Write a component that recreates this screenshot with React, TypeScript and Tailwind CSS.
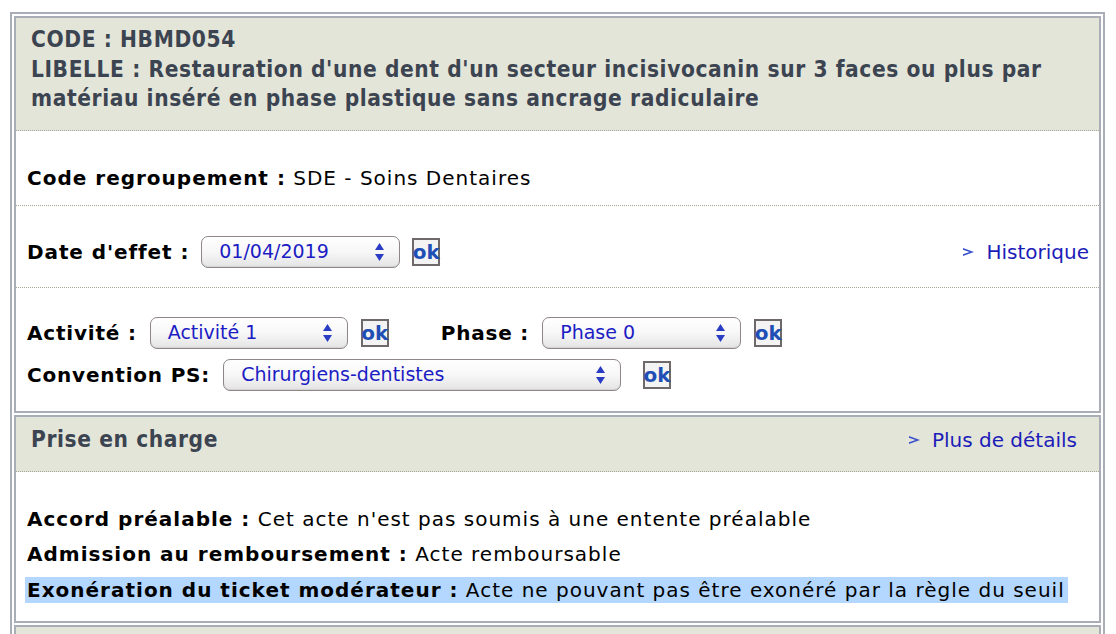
import React from 'react';

const body = { fontFamily: '"DejaVu Sans", Verdana, sans-serif' };
const head = { fontFamily: '"DejaVu Sans Condensed", "DejaVu Sans", Tahoma, sans-serif' };

function Arrows() {
  return (
    <svg width="9" height="18" viewBox="0 0 9 18" className="shrink-0">
      <polygon points="0,7 4.5,0 9,7" fill="#2a3cc4" />
      <polygon points="0,11 9,11 4.5,18" fill="#2a3cc4" />
    </svg>
  );
}

function Select({ value, width }: { value: string; width: string }) {
  return (
    <div
      className={`${width} h-[32px] shrink-0 rounded-[7px] border-[1.5px] border-[#8e8688] bg-gradient-to-b from-white via-[#f7f7f7] to-[#e4e4e4] flex items-center pl-[17px] pr-[15px] text-[19px] tracking-normal text-[#1c1cc4] shadow-[inset_0_-1px_1px_rgba(0,0,0,0.08)]`}
    >
      <span className="flex-1 whitespace-nowrap">{value}</span>
      <Arrows />
    </div>
  );
}

function Ok() {
  return (
    <div className="w-[28px] h-[28px] shrink-0 border-2 border-[#6e6869] bg-[#f3f3f3] flex items-center justify-center text-[20px] font-bold tracking-normal text-[#1f4fb5] leading-none">
      ok
    </div>
  );
}

function Chevron() {
  return (
    <svg width="11" height="8" viewBox="0 0 11 8" className="shrink-0">
      <path d="M0 0 L11 4 L0 8 L0 6.2 L6.5 4 L0 1.8 Z" fill="#3a52cc" />
    </svg>
  );
}

function LinkMore({ label }: { label: string }) {
  return (
    <a className="flex items-center gap-[12px] text-[20px] tracking-normal font-normal text-[#1c1cb8]" style={body}>
      <Chevron />
      <span>{label}</span>
    </a>
  );
}

export default function App() {
  return (
    <div className="min-h-screen bg-white pl-[10px] pt-[12px] overflow-hidden" style={body}>
      <div className="w-[1095px] border-2 border-[#a9adb5] p-[2px] flex flex-col gap-[2px]">
        {/* Fiche acte */}
        <div className="border-2 border-[#a9adb5]">
          <div
            className="bg-[#e4e5d9] px-[15px] pt-[7px] pb-[16px] text-[22.5px] leading-[29.5px] tracking-[0.6px] font-bold text-[#3b4450] border-b border-dotted border-[#a9a597] whitespace-nowrap"
            style={head}
          >
            <div>CODE : HBMD054</div>
            <div>
              LIBELLE : Restauration d'une dent d'un secteur incisivocanin sur 3 faces ou plus par
              <br />
              matériau inséré en phase plastique sans ancrage radiculaire
            </div>
          </div>

          <div className="px-[11px] pt-[35px] pb-[15px] text-[20px] leading-[24px] tracking-[1px] text-black border-b border-dotted border-[#a9a597]">
            <span className="font-bold">Code regroupement :</span> SDE - Soins Dentaires
          </div>

          <div className="pl-[11px] pr-[10px] pt-[30px] pb-[19px] flex items-center border-b border-dotted border-[#a9a597]">
            <div className="flex items-center h-[32px] text-[20px] tracking-[0.9px] text-black">
              <span className="font-bold mr-[12px]">Date d'effet :</span>
              <Select value="01/04/2019" width="w-[199px]" />
              <div className="ml-[12px]">
                <Ok />
              </div>
            </div>
            <div className="ml-auto">
              <LinkMore label="Historique" />
            </div>
          </div>

          <div className="px-[11px] pt-[29px] pb-[20px] flex flex-col gap-[10px] text-[20px] tracking-[0.8px] text-black">
            <div className="flex items-center h-[32px]">
              <span className="font-bold mr-[13px]">Activité :</span>
              <Select value="Activité 1" width="w-[198px]" />
              <div className="ml-[13px]">
                <Ok />
              </div>
              <span className="font-bold ml-[52px] mr-[13px]">Phase :</span>
              <Select value="Phase 0" width="w-[199px]" />
              <div className="ml-[13px]">
                <Ok />
              </div>
            </div>
            <div className="flex items-center h-[32px]">
              <span className="font-bold mr-[13px]">Convention PS:</span>
              <Select value="Chirurgiens-dentistes" width="w-[398px]" />
              <div className="ml-[22px]">
                <Ok />
              </div>
            </div>
          </div>
        </div>

        {/* Prise en charge */}
        <div className="border-2 border-[#a9adb5]">
          <div className="bg-[#e4e5d9] pl-[15px] pr-[22px] pt-[8px] pb-[16px] flex items-center border-b border-dotted border-[#a9a597]">
            <h2 className="text-[22.5px] leading-[29.5px] tracking-[0.6px] font-bold text-[#3b4450]" style={head}>
              Prise en charge
            </h2>
            <div className="ml-auto">
              <LinkMore label="Plus de détails" />
            </div>
          </div>
          <div className="px-[11px] pt-[30px] pb-[13px] text-[20px] leading-[35.5px] tracking-[1px] text-black">
            <div>
              <span className="font-bold">Accord préalable :</span> Cet acte n'est pas soumis à une entente préalable
            </div>
            <div>
              <span className="font-bold">Admission au remboursement :</span> Acte remboursable
            </div>
            <div>
              <span className="bg-[#b3d7fe] -ml-[2px] pl-[2px] pr-[3px] py-[1px]">
                <span className="font-bold">Exonération du ticket modérateur :</span> Acte ne pouvant pas être exonéré par la règle du seuil
              </span>
            </div>
          </div>
        </div>

        {/* Section suivante */}
        <div className="border-2 border-[#a9adb5]">
          <div className="bg-[#e4e5d9] h-[50px]" />
        </div>
      </div>
    </div>
  );
}
